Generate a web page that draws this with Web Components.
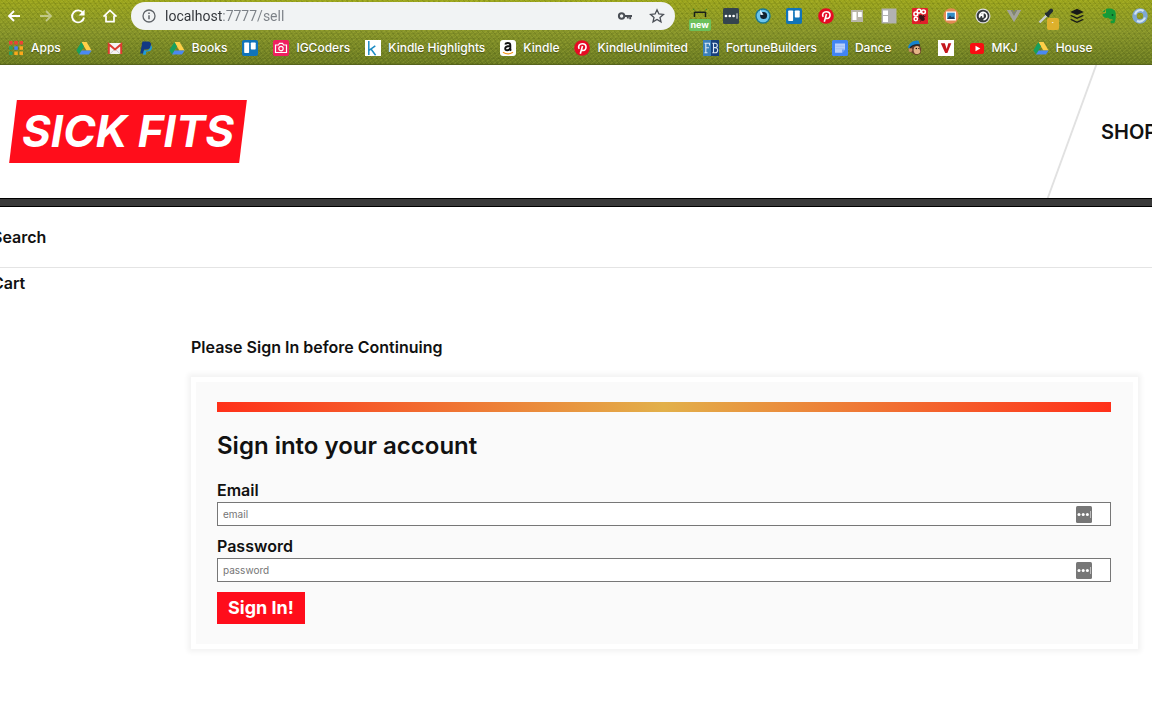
<!DOCTYPE html>
<html lang="en">
<head>
<meta charset="utf-8">
<title>Sick Fits</title>
<style>
html, body { margin: 0; }
body { background: #fff; color: #111; font-family: "Inter", "Liberation Sans", sans-serif; overflow-x: hidden; }
</style>
</head>
<body>
<sick-app></sick-app>
<script>
const ICONS = {
  back: '<path d="M14 8H3M8 3L3 8l5 5" fill="none" stroke="#fff" stroke-width="1.8"/>',
  forward: '<path d="M2 8h11M8 3l5 5-5 5" fill="none" stroke="#fff" stroke-opacity=".45" stroke-width="1.8"/>',
  reload: '<path d="M13.2 5.2A6 6 0 1 0 14 9.5" fill="none" stroke="#fff" stroke-width="1.9"/><path d="M14.6 1.6v6H8.6z" fill="#fff"/>',
  home: '<path d="M1.5 8.6L8 2.4l6.500 6.200M4 7.500V13.600h8V7.500" fill="none" stroke="#fff" stroke-width="1.700"/>',
  info: '<circle cx="8" cy="8" r="6" fill="none" stroke="#5f6368" stroke-width="1.300"/><path d="M8 7.200v4M8 4.600v1.500" stroke="#5f6368" stroke-width="1.500"/>',
  key: '<circle cx="4.600" cy="8" r="2.700" fill="none" stroke="#4a4e55" stroke-width="2"/><path d="M7.500 8H15M13.200 8v3.300M10.800 8v2.400" fill="none" stroke="#4a4e55" stroke-width="1.900"/>',
  star: '<path d="M8 1.800l1.900 4.200 4.500.4-3.400 3 1 4.500L8 11.500l-4 2.400 1-4.500-3.400-3 4.500-.4z" fill="none" stroke="#4a4e55" stroke-width="1.300"/>',
  apps: '<path d="M1 1h3.500v3.500H1zM6.300 1h3.500v3.500H6.300zM11.500 1H15v3.500h-3.500z" fill="#ea4335"/><path d="M1 6.300h3.500v3.500H1zM1 11.500h3.500V15H1z" fill="#2fa05a"/><path d="M6.300 6.300h3.500v3.500H6.300z" fill="#4285f4"/><path d="M11.500 6.300H15v3.500h-3.500zM6.300 11.500h3.500V15H6.300zM11.500 11.500H15V15h-3.500z" fill="#fba81c"/>',
  drive: '<path d="M5.400 2h5.200L15.600 10.400h-5.200z" fill="#ffcf48"/><path d="M5.400 2L8 6.400 3 14.500.400 10.300z" fill="#17a05e"/><path d="M5.600 10.400h10L13 14.500H3z" fill="#4a89f3"/>',
  gmail: '<rect x="1" y="3" width="14" height="11" rx="1" fill="#f4f4f4"/><path d="M3 13.800L8 9l5 4.800" fill="none" stroke="#ccc"/><path d="M1.800 14V4.200L8 9.500l6.200-5.300V14" fill="none" stroke="#dd3b30" stroke-width="2"/>',
  paypal: '<path d="M4.400 1.500h5.400c2.700 0 3.700 1.700 3.200 4-.6 3-2.600 4-5.300 4H6.200L5.400 13.500H2.200z" fill="#123984"/><path d="M12.900 5.200c1.100.8 1.200 2 .9 3.200-.6 2.200-2 3-4.300 3H8.300l-.6 3.300H4.900l.9-4.200h2.400c2.700 0 4.200-2.200 4.700-5.300z" fill="#1e9be0"/>',
  trello: '<rect width="16" height="16" rx="2" fill="#1074ba"/><rect x="2.200" y="2.500" width="4.900" height="10.500" rx=".7" fill="#fff"/><rect x="8.800" y="2.500" width="4.900" height="7" rx=".7" fill="#fff"/>',
  camera: '<rect width="16" height="16" rx="2" fill="#ef1f60"/><path d="M2.500 5h3l1-1.700h3l1 1.700h3v7.500h-11z" fill="none" stroke="#fff" stroke-width="1.200"/><circle cx="8" cy="8.600" r="2.200" fill="none" stroke="#fff" stroke-width="1.200"/>',
  kindle: '<rect width="16" height="16" fill="#fff"/><path d="M3.800 1v14M10.300 5.800L4 10.300M6 9l4.600 6.200" fill="none" stroke="#1d8cc4" stroke-width="1.500"/>',
  amazon: '<rect width="16" height="16" rx="3" fill="#fff"/><path d="M5.200 4.600c.5-2 5-2.300 5.100.4V9.600l.8 1M10.200 6c-3 0-5 .5-5 2.500 0 2.400 3.700 2.400 4.900 0" fill="none" stroke="#111" stroke-width="1.900"/><path d="M3 12.200c3 2 7 2 10 0" fill="none" stroke="#f7991d" stroke-width="1.300"/>',
  pin: '<circle cx="8" cy="8" r="7.800" fill="#e60a24"/><path d="M5.200 8.800C3.600 6 5.500 3.700 8.300 3.700c5.200 0 4.500 6.800.8 6.800-1 0-1.700-.7-1.700-.7M8.500 6L6.300 13.800" fill="none" stroke="#fff" stroke-width="1.600"/>',
  fb: '<rect width="8" height="16" fill="#3b80b9"/><rect x="8" width="8" height="16" fill="#173f7c"/><path d="M2.800 3v10M1.500 12.800h3M1.500 3.300h5v2.200M3 7.800h3M10.500 3v10M9.300 3.300h3c2.800 0 2.500 4.300 0 4.300h-2M12.300 7.700c3.300 0 3 5.100 0 5.100h-3" fill="none" stroke="#dce8f5" stroke-width="1.100"/>',
  doc: '<rect width="16" height="16" rx="1.500" fill="#4285f4"/><path d="M3 3.500h10v6L10 12.800H3z" fill="#b9d0fb"/><path d="M3.500 6.200h9M3.500 8.800h9" stroke="#9abcf8" fill="none"/><path d="M13 9.500h-3v3.300z" fill="#6b9cf5"/>',
  chimp: '<path d="M4.500 5l7.500-1 2.300 5-1 5-5 1L2.500 11z" fill="#6b3e2b"/><path d="M7.500 7c3-2 5.500-.5 5.200 2.700 1.600 2.300-.4 4.800-3.700 4.300-2.300-.4-3.100-4.400-1.500-7z" fill="#e4b487"/><circle cx="3.500" cy="10" r="1.900" fill="#c98c62"/><path d="M1 8C2 3 6 .2 11.500.6l1.400 4C8.500 4 5 5.200 3 8.200z" fill="#1684ce"/><path d="M3 8.200c2-3 5-4 10-3" stroke="#222" stroke-width="1.300" fill="none"/><circle cx="9.300" cy="8.500" r=".7"/><circle cx="11.800" cy="8.500" r=".6"/>',
  vred: '<rect width="16" height="16" fill="#fff"/><path d="M2.800 3.300h4L8.700 9l1.600-5.700h3L9.400 13H7.200z" fill="#c4161c"/>',
  youtube: '<rect x="1" y="3" width="14" height="11" rx="2.500" fill="#f90d12"/><path d="M6.500 5.700v5.600L11.300 8.500z" fill="#fff"/>',
  dots: '<rect width="16" height="16" rx="1.500" fill="#34444e"/><g fill="#fff"><circle cx="3" cy="8" r="1.350"/><circle cx="6.800" cy="8" r="1.350"/><circle cx="10.600" cy="8" r="1.350"/></g><path d="M14 5.300v5.400" stroke="#dbe1e4" stroke-width="1"/>',
  eye: '<circle cx="8" cy="8" r="7.700" fill="#1a7792"/><circle cx="8" cy="8" r="6.300" fill="#6ac5ee"/><circle cx="8.600" cy="7.500" r="3.500" fill="#12222f"/><path d="M5 1.500l3.500 5.200L5.500 7z" fill="#e9f8ff"/>',
  greyboard: '<path d="M2 2h12v12H2z" fill="#b9b6a9"/><rect x="3.500" y="4" width="4" height="8" fill="#fff"/><rect x="9" y="4" width="3.800" height="5" fill="#fff"/>',
  panels: '<rect x=".5" y=".5" width="15" height="15" fill="#b2b2b2"/><rect x="2" y="2.500" width="5" height="4.500" fill="#fff"/><rect x="2" y="8" width="5" height="6" fill="#fff"/>',
  bug: '<rect width="16" height="16" rx="1" fill="#df2029"/><g fill="none" stroke="#fff" stroke-width="1.500"><circle cx="3.800" cy="6" r="1.900"/><circle cx="7" cy="3.200" r="1.900"/><circle cx="11.500" cy="3.800" r="1.900"/><circle cx="3.800" cy="11" r="1.700"/></g><ellipse cx="9.800" cy="9.800" rx="2.200" ry="3.500" transform="rotate(-40 9.800 9.800)" fill="#39151a"/><path d="M6.500 11.500l7-3.500M8.500 13.500l3.500-7" stroke="#39151a" stroke-width=".9"/>',
  photo: '<circle cx="8" cy="8" r="7.700" fill="#e48b55"/><rect x="3" y="3.500" width="10" height="9" fill="#fff"/><rect x="4.200" y="4.700" width="7.600" height="6.300" fill="#318cc7"/><path d="M4.200 11l2.800-3.500 2 2 1.200-1.300 1.600 2.800z" fill="#203c62"/>',
  swirl: '<circle cx="8" cy="8" r="7.500" fill="#ddd"/><circle cx="8" cy="8" r="6.300" fill="#353a3d"/><path d="M4.800 9.600A3.700 3.700 0 1 1 8.500 11.800M8 9.600l-.2-3.400-3 2" fill="none" stroke="#fff" stroke-width="1.600"/>',
  vue: '<path d="M.8 2h4L8 7.700 11.200 2h4L8 14.300z" fill="#a3a39b"/><path d="M4.800 2h2L8 4.200 9.200 2h2L8 7.700z" fill="#7d8278"/>',
  dropper: '<path d="M1.500 14.500L8.500 7.500" stroke="#c7ced0" stroke-width="2.400"/><path d="M7.200 5l3.800 3.800" stroke="#222d32" stroke-width="2"/><path d="M9.800 6.200l3.400-3.600" stroke="#222d32" stroke-width="4" stroke-linecap="round"/>',
  stack: '<g fill="#171a17"><path d="M8 .7l6.800 3.200L8 7 1.200 3.900z"/><path d="M2.500 7L8 9.500 13.500 7l1.500.8L8 11 1 7.800z"/><path d="M2.500 11L8 13.500l5.500-2.500 1.500.8L8 15 1 11.800z"/></g>',
  elephant: '<path d="M5 1c5-1.200 9.500.4 9.700 4.200.2 3.600 0 7.600-1.200 9.500-.7 1-4.300 1-4-1.300.2-1.200 2-.9 2-.3v-2C8.500 12.300 8 9.800 7 9.800c-3 .5-4.600-.2-5.700-3.600L5 5z" fill="#159b38"/><path d="M4 1.500V4H1.500z" fill="#159b38"/><circle cx="11.500" cy="7" r=".9" fill="#0b4b21"/>',
  ring: '<circle cx="8" cy="8" r="5.500" fill="none" stroke="#7fa8d3" stroke-width="4.500"/><path d="M3 6.500A5.500 5.500 0 0 1 11.500 3M13 9.500A5.500 5.500 0 0 1 5 12.800" fill="none" stroke="#d2e4f4" stroke-width="2.200"/>',
  menuhat: '<path d="M2 5l1-.8h10l1 .8M2.500 4v5M13.500 4v5" fill="none" stroke="#18201a" stroke-width="1.500"/><path d="M1 1l1.500 1M15 1l-1.500 1" stroke="#35832e"/>',
  autofill: '<rect width="16" height="17" rx="1.500" fill="#777"/><g fill="#fff"><circle cx="3" cy="8.500" r="1.500"/><circle cx="7.200" cy="8.500" r="1.500"/><circle cx="11.400" cy="8.500" r="1.500"/></g><path d="M14.500 5v7" stroke="#bbb" stroke-width="1"/>'
};

function define(name, html, setup) {
  const template = document.createElement('template');
  template.innerHTML = html;
  customElements.define(name, class extends HTMLElement {
    connectedCallback() {
      if (this.shadowRoot) return;
      this.attachShadow({ mode: 'open' }).append(template.content.cloneNode(true));
      if (setup) setup(this, this.shadowRoot);
    }
  });
}

define('ui-icon', `
<style>:host{display:block;flex:none;width:16px;height:16px} svg{display:block;width:100%;height:100%;overflow:visible}</style>
<svg viewBox="0 0 16 16" aria-hidden="true"></svg>`,
(host, root) => {
  const svg = root.querySelector('svg');
  svg.innerHTML = ICONS[host.getAttribute('name')];
  if (host.getAttribute('name') === 'autofill') svg.setAttribute('viewBox', '0 0 16 17');
});

define('icon-button', `
<style>
:host{display:block;position:relative}
button{display:block;border:0;background:none;padding:0;margin:0;cursor:pointer}
::slotted(span){position:absolute}
</style>
<button type="button"></button><slot></slot>`,
(host, root) => {
  const icon = document.createElement('ui-icon');
  icon.setAttribute('name', host.getAttribute('icon'));
  const button = root.querySelector('button');
  button.append(icon);
  button.setAttribute('aria-label', host.getAttribute('icon'));
});

define('book-mark', `
<style>
:host{display:block;flex:none}
a{display:flex;align-items:center;gap:7px;color:#fff;text-decoration:none;white-space:nowrap;font-size:12px;line-height:16px;font-weight:500;text-shadow:0 1px 1px rgba(0,0,0,.35)}
</style>
<a href="#"><slot></slot></a>`,
(host, root) => {
  const icon = document.createElement('ui-icon');
  icon.setAttribute('name', host.getAttribute('icon'));
  const a = root.querySelector('a');
  a.prepend(icon);
  if (!host.textContent) {
    a.setAttribute('aria-label', host.getAttribute('icon'));
    a.querySelector('slot').remove();
  }
});

define('browser-bar', `
<style>
:host{display:block;box-sizing:border-box;height:65px;border-bottom:1px solid #56631c;overflow:hidden;
background:
 repeating-linear-gradient(52deg,rgba(40,60,0,.13) 0 1px,transparent 1px 4px),
 repeating-linear-gradient(-38deg,rgba(220,230,80,.12) 0 1px,transparent 1px 3px),
 repeating-linear-gradient(0deg,rgba(40,50,0,.08) 0 1px,transparent 1px 5px),
 linear-gradient(#9ca51d,#87942a 50%,#6a7a22)}
.tools{display:flex;align-items:center;height:32px}
.nav{display:flex;gap:16px;padding:0 13px 0 6px}
.address{flex:1;display:flex;align-items:center;gap:8px;height:28px;box-sizing:border-box;padding:0 10px;border-radius:14px;background:#f1f3f4}
.field{flex:1;display:grid;align-items:center;font-family:Roboto,"Liberation Sans",sans-serif;font-size:14px;line-height:20px}
.field input{width:100%;box-sizing:border-box;border:0;padding:0;margin:0;outline:0;font:inherit;color:transparent;caret-color:#333;background:linear-gradient(90deg,#303338 57px,#7b8086 57px);-webkit-background-clip:text;background-clip:text}
.right{display:flex;gap:16px}
.ext{flex:none;width:472px;margin:0 -4px 0 9px;display:grid;grid-template-columns:repeat(15,1fr);justify-items:center}
.new{left:-3px;top:11px;width:22px;height:12px;border-radius:2px;background:#6cc05b;color:#fff;font-size:9px;line-height:12px;font-weight:700;text-align:center}
.lock{left:9px;top:10px;width:12px;height:12px;border-radius:2px;background:#ddb02c;color:#fff;font-size:9px;line-height:10px;text-align:center}
.marks{display:flex;align-items:center;gap:15px;height:32px;padding-left:8px}
</style>
<div class="tools">
 <div class="nav">
  <icon-button icon="back"></icon-button><icon-button icon="forward"></icon-button><icon-button icon="reload"></icon-button><icon-button icon="home"></icon-button>
 </div>
 <div class="address">
  <ui-icon name="info"></ui-icon>
  <div class="field"><input type="text" aria-label="Address" value="localhost:7777/sell"></div>
  <div class="right"><icon-button icon="key"></icon-button><icon-button icon="star"></icon-button></div>
 </div>
 <div class="ext">
  <icon-button icon="menuhat"><span class="new">new</span></icon-button>
  <icon-button icon="dots"></icon-button><icon-button icon="eye"></icon-button><icon-button icon="trello"></icon-button><icon-button icon="pin"></icon-button><icon-button icon="greyboard"></icon-button><icon-button icon="panels"></icon-button><icon-button icon="bug"></icon-button><icon-button icon="photo"></icon-button><icon-button icon="swirl"></icon-button><icon-button icon="vue"></icon-button>
  <icon-button icon="dropper"><span class="lock">·</span></icon-button>
  <icon-button icon="stack"></icon-button><icon-button icon="elephant"></icon-button><icon-button icon="ring"></icon-button>
 </div>
</div>
<nav class="marks" aria-label="Bookmarks">
 <book-mark icon="apps">Apps</book-mark><book-mark icon="drive"></book-mark><book-mark icon="gmail"></book-mark><book-mark icon="paypal"></book-mark><book-mark icon="drive">Books</book-mark><book-mark icon="trello"></book-mark><book-mark icon="camera">IGCoders</book-mark><book-mark icon="kindle">Kindle Highlights</book-mark><book-mark icon="amazon">Kindle</book-mark><book-mark icon="pin">KindleUnlimited</book-mark><book-mark icon="fb">FortuneBuilders</book-mark><book-mark icon="doc">Dance</book-mark><book-mark icon="chimp"></book-mark><book-mark icon="vred"></book-mark><book-mark icon="youtube">MKJ</book-mark><book-mark icon="drive">House</book-mark>
</nav>`);

define('site-header', `
<style>
:host{display:block}
.bar{display:flex;justify-content:space-between;align-items:stretch;height:133px;overflow:hidden}
.rule{height:7px;background:#393939;border:solid #000;border-width:1px 0}
.logo{position:relative;z-index:0;align-self:center;margin-left:13px;padding:0 9px;line-height:63px;font-size:44px;font-weight:700;font-style:italic;color:#fff;text-decoration:none;white-space:nowrap}
.logo::before{content:"";position:absolute;z-index:-1;inset:0;background:#ff0d1b;transform:skewX(-7deg)}
.links{position:relative;display:flex;align-items:center;width:80px;flex:none}
.links::before{content:"";position:absolute;left:-1px;top:0;bottom:0;width:2px;background:#e1e1e1;transform:skewX(-20deg)}
.links a{padding-left:29px;font-size:20px;font-weight:600;color:#111;text-decoration:none}
.search,.cart{font-size:16px;font-weight:600}
.search{line-height:60px;border-bottom:1px solid #e4e4e4}
.cart{line-height:30px}
.search span,.cart span{margin-left:-8px}
</style>
<header><div class="bar"><a class="logo" href="#">SICK FITS</a><nav class="links"><a href="#">SHOP</a></nav></div><div class="rule"></div></header>
<div class="search"><span>Search</span></div>
<div class="cart"><span>Cart</span></div>`);

define('form-field', `
<style>
:host{display:block}
label{display:block;font-size:16px;line-height:20px;font-weight:600;margin-bottom:2px}
.box{position:relative}
input{display:block;width:100%;height:24px;box-sizing:border-box;border:1px solid #777;border-radius:0;background:#fff;padding:0 48px 0 5px;margin:0;font-family:inherit;font-size:10px;color:#111}
input::placeholder{color:#757575;opacity:1}
ui-icon{position:absolute;right:19px;top:4px;height:17px}
</style>
<label for="field"></label>
<div class="box"><input id="field"><ui-icon name="autofill"></ui-icon></div>`,
(host, root) => {
  root.querySelector('label').textContent = host.getAttribute('label');
  const input = root.querySelector('input');
  input.type = input.placeholder = host.getAttribute('type');
});

define('sign-in', `
<style>
:host{display:block}
form{border:5px solid #fff;background:#fafafa;background-clip:padding-box;box-shadow:0 0 5px 3px rgba(0,0,0,.05);padding:20px 22px 20px 21px}
form::before{content:"";display:block;height:10px;background:linear-gradient(to right,#ff3019,#e2b04a 50%,#ff3019)}
h2{margin:20px 0;font-size:24px;line-height:28px;font-weight:600}
form-field{margin-bottom:10px}
button{display:block;border:0;border-radius:0;margin:0;padding:0 11px;background:#ff0d1b;color:#fff;font-family:inherit;font-size:18px;line-height:32px;font-weight:700}
</style>
<form><h2>Sign into your account</h2>
<form-field label="Email" type="email"></form-field>
<form-field label="Password" type="password"></form-field>
<button type="button">Sign In!</button></form>`);

define('sick-app', `
<style>
:host{display:block}
main{padding:39px 14px 40px 191px}
p{margin:0 0 20px;font-size:16px;line-height:20px;font-weight:600}
</style>
<browser-bar></browser-bar>
<site-header></site-header>
<main><p>Please Sign In before Continuing</p><sign-in></sign-in></main>`);
</script>
</body>
</html>
